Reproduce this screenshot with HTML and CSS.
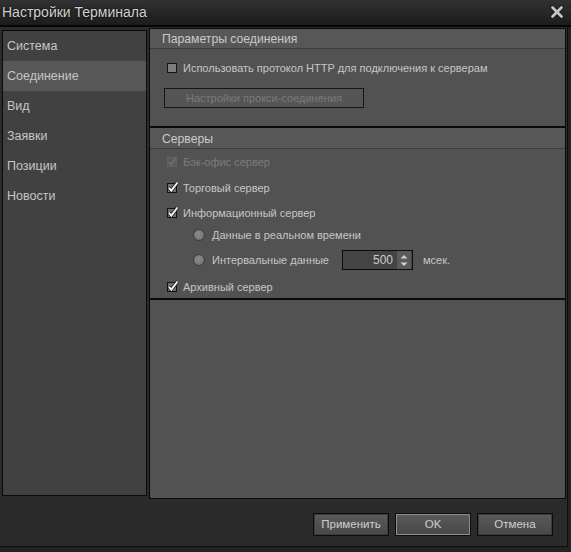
FILE: index.html
```html
<!DOCTYPE html>
<html lang="ru">
<head>
<meta charset="utf-8">
<title>Настройки Терминала</title>
<link rel="stylesheet" href="styles.css">
</head>
<body>
<div class="window">
  <div class="titlebar">
    <span class="title">Настройки Терминала</span>
    <svg class="close" width="14" height="14" viewBox="0 0 14 14">
      <path d="M2.5 2.5 L11.5 11.5 M11.5 2.5 L2.5 11.5" stroke="#1a1a1a" stroke-width="4.6" stroke-linecap="round"/>
      <path d="M2.5 2.5 L11.5 11.5 M11.5 2.5 L2.5 11.5" stroke="#c4c4c4" stroke-width="2.8" stroke-linecap="round"/>
    </svg>
  </div>
  <div class="client">
    <div class="main">
      <nav class="nav">
        <div class="nav-item">Система</div>
        <div class="nav-item active">Соединение</div>
        <div class="nav-item">Вид</div>
        <div class="nav-item">Заявки</div>
        <div class="nav-item">Позиции</div>
        <div class="nav-item">Новости</div>
      </nav>
      <div class="panel">
        <section class="group group-conn">
          <div class="group-header">Параметры соединения</div>
          <div class="group-body conn-body">
            <div class="row row-http">
              <svg class="cb" width="14" height="14" viewBox="0 0 14 14">
                <rect x="1.5" y="2.5" width="9" height="9" fill="#7c7c7c" stroke="#161616"/>
              </svg>
              <span>Использовать протокол HTTP для подключения к серверам</span>
            </div>
            <div class="btn-proxy">Настройки прокси-соединения</div>
          </div>
        </section>
        <section class="group group-servers">
          <div class="group-header">Серверы</div>
          <div class="group-body servers-body">
            <div class="row r1 disabled">
              <svg class="cb" width="14" height="14" viewBox="0 0 14 14">
                <rect x="1.5" y="2.5" width="9" height="9" fill="#5a5a5a" stroke="#636363"/>
                <path d="M3 7 L5.3 9.6 L10.5 2.5" fill="none" stroke="#6c6c6c" stroke-width="2.2"/>
              </svg>
              <span>Бэк-офис сервер</span>
            </div>
            <div class="row r2">
              <svg class="cb" width="14" height="14" viewBox="0 0 14 14">
                <rect x="1.5" y="2.5" width="9" height="9" fill="#6e6e6e" stroke="#121212"/>
                <path d="M3 7 L5.3 9.6 L11.5 1.5" fill="none" stroke="#111" stroke-width="3.4"/>
                <path d="M3 7 L5.3 9.6 L11.5 1.5" fill="none" stroke="#f4f4f4" stroke-width="2"/>
              </svg>
              <span>Торговый сервер</span>
            </div>
            <div class="row r3">
              <svg class="cb" width="14" height="14" viewBox="0 0 14 14">
                <rect x="1.5" y="2.5" width="9" height="9" fill="#6e6e6e" stroke="#121212"/>
                <path d="M3 7 L5.3 9.6 L11.5 1.5" fill="none" stroke="#111" stroke-width="3.4"/>
                <path d="M3 7 L5.3 9.6 L11.5 1.5" fill="none" stroke="#f4f4f4" stroke-width="2"/>
              </svg>
              <span>Информационный сервер</span>
            </div>
            <div class="row r4 sub">
              <span class="radio"></span>
              <span>Данные в реальном времени</span>
            </div>
            <div class="row r5 sub">
              <span class="radio"></span>
              <span class="interval-label">Интервальные данные</span>
              <div class="spin">
                <span class="spin-value">500</span>
                <span class="spin-btns">
                  <svg width="12" height="17" viewBox="0 0 12 17">
                    <path d="M2.5 6.5 L6 3 L9.5 6.5 Z" fill="#cfcfcf"/>
                    <path d="M2.5 10.5 L6 14 L9.5 10.5 Z" fill="#cfcfcf"/>
                  </svg>
                </span>
              </div>
              <span class="unit">мсек.</span>
            </div>
            <div class="row r6">
              <svg class="cb" width="14" height="14" viewBox="0 0 14 14">
                <rect x="1.5" y="2.5" width="9" height="9" fill="#6e6e6e" stroke="#121212"/>
                <path d="M3 7 L5.3 9.6 L11.5 1.5" fill="none" stroke="#111" stroke-width="3.4"/>
                <path d="M3 7 L5.3 9.6 L11.5 1.5" fill="none" stroke="#f4f4f4" stroke-width="2"/>
              </svg>
              <span>Архивный сервер</span>
            </div>
          </div>
        </section>
      </div>
    </div>
    <div class="footer">
      <div class="btn">Применить</div>
      <div class="btn btn-default">OK</div>
      <div class="btn">Отмена</div>
    </div>
  </div>
</div>
</body>
</html>
```

FILE: styles.css
```css
* { box-sizing: border-box; }

html, body {
  margin: 0;
  padding: 0;
}

body {
  width: 571px;
  height: 552px;
  background: #232323;
  font-family: "Liberation Sans", Arial, sans-serif;
  font-size: 11px;
  color: #c6c6c6;
  overflow: hidden;
}

.window {
  width: 571px;
  height: 552px;
  display: flex;
  flex-direction: column;
}

.titlebar {
  height: 27px;
  flex: none;
  background: linear-gradient(#313131, #1c1c1c);
  border-bottom: 2px solid #050505;
  display: flex;
  align-items: center;
  justify-content: space-between;
  padding: 0 7px 2px 2px;
}

.title {
  font-size: 14px;
  color: #d2d2d2;
  text-shadow: 0 0 2px #000;
}

.close {
  display: block;
}

.client {
  width: 568px;
  height: 520px;
  background: #2b2b2b;
  border-right: 1px solid #0d0d0d;
  border-bottom: 1px solid #0d0d0d;
  display: flex;
  flex-direction: column;
  padding: 1px 1px 0 2px;
}

.main {
  display: flex;
  align-items: flex-start;
  gap: 2px;
}

.nav {
  width: 145px;
  height: 466px;
  margin-top: 2px;
  background: #414141;
  border: 1px solid #0a0a0a;
  flex: none;
}

.nav-item {
  height: 30px;
  line-height: 30px;
  padding-left: 4px;
  font-size: 12.5px;
  color: #c6c6c6;
}

.nav-item.active {
  background: #575757;
}

.panel {
  width: 417px;
  height: 471px;
  background: #525252;
  border: 1px solid #0a0a0a;
  flex: none;
}

.group {
  border-bottom: 2px solid #0a0a0a;
}

.group-header {
  height: 20px;
  line-height: 21px;
  padding-left: 12px;
  background: #575757;
  border-bottom: 1px solid #3c3c3c;
  font-size: 12.2px;
  color: #c9c9c9;
}

.group-servers .group-header {
  height: 21px;
  line-height: 23px;
}

.conn-body {
  padding: 10px 0 18px 16px;
}

.row {
  display: flex;
  align-items: center;
  height: 25px;
}

.row .cb {
  flex: none;
  margin-right: 3px;
}

.row-http {
  height: 18px;
  margin-bottom: 11px;
}

.btn-proxy {
  width: 200px;
  height: 20px;
  margin-left: -2px;
  border: 1px solid #151515;
  background: #555555;
  color: #7a7a7a;
  text-align: center;
  line-height: 18px;
}

.servers-body {
  padding: 0 0 0 16px;
}

.servers-body .r1 { height: 26px; }
.servers-body .r2 { height: 26px; }
.servers-body .r3 { height: 24px; }
.servers-body .r4 { height: 20px; }
.servers-body .r5 { height: 30px; }
.servers-body .r6 { height: 23px; }

.disabled {
  color: #7c7c7c;
}

.sub {
  padding-left: 27px;
}

.radio {
  width: 12px;
  height: 12px;
  border-radius: 50%;
  background: radial-gradient(circle at 45% 40%, #8a8a8a, #6e6e6e);
  border: 1px solid #3a3a3a;
  margin-right: 7px;
  flex: none;
}

.interval-label {
  width: 130px;
  flex: none;
}

.spin {
  width: 71px;
  height: 20px;
  border: 1px solid #0c0c0c;
  background: #444444;
  display: flex;
  align-items: stretch;
  flex: none;
}

.spin-value {
  flex: 1;
  text-align: right;
  padding-right: 4px;
  line-height: 18px;
  font-size: 12px;
  color: #cdcdcd;
}

.spin-btns {
  width: 14px;
  background: #5a5a5a;
  display: flex;
  align-items: center;
  justify-content: center;
  margin: 0 1px 0 0;
}

.spin-btns svg {
  display: block;
}

.unit {
  margin-left: 10px;
}

.footer {
  display: flex;
  justify-content: flex-end;
  gap: 6px;
  padding: 14px 13px 0 0;
}

.btn {
  width: 76px;
  height: 23px;
  border: 1px solid #0c0c0c;
  background: linear-gradient(#5b5b5b, #474747);
  box-shadow: inset 0 0 0 1px #3b3b3b;
  color: #cfcfcf;
  text-align: center;
  line-height: 21px;
  font-size: 11.5px;
}

.btn-default {
  box-shadow: inset 0 0 0 1px #8e8e8e;
}
```
